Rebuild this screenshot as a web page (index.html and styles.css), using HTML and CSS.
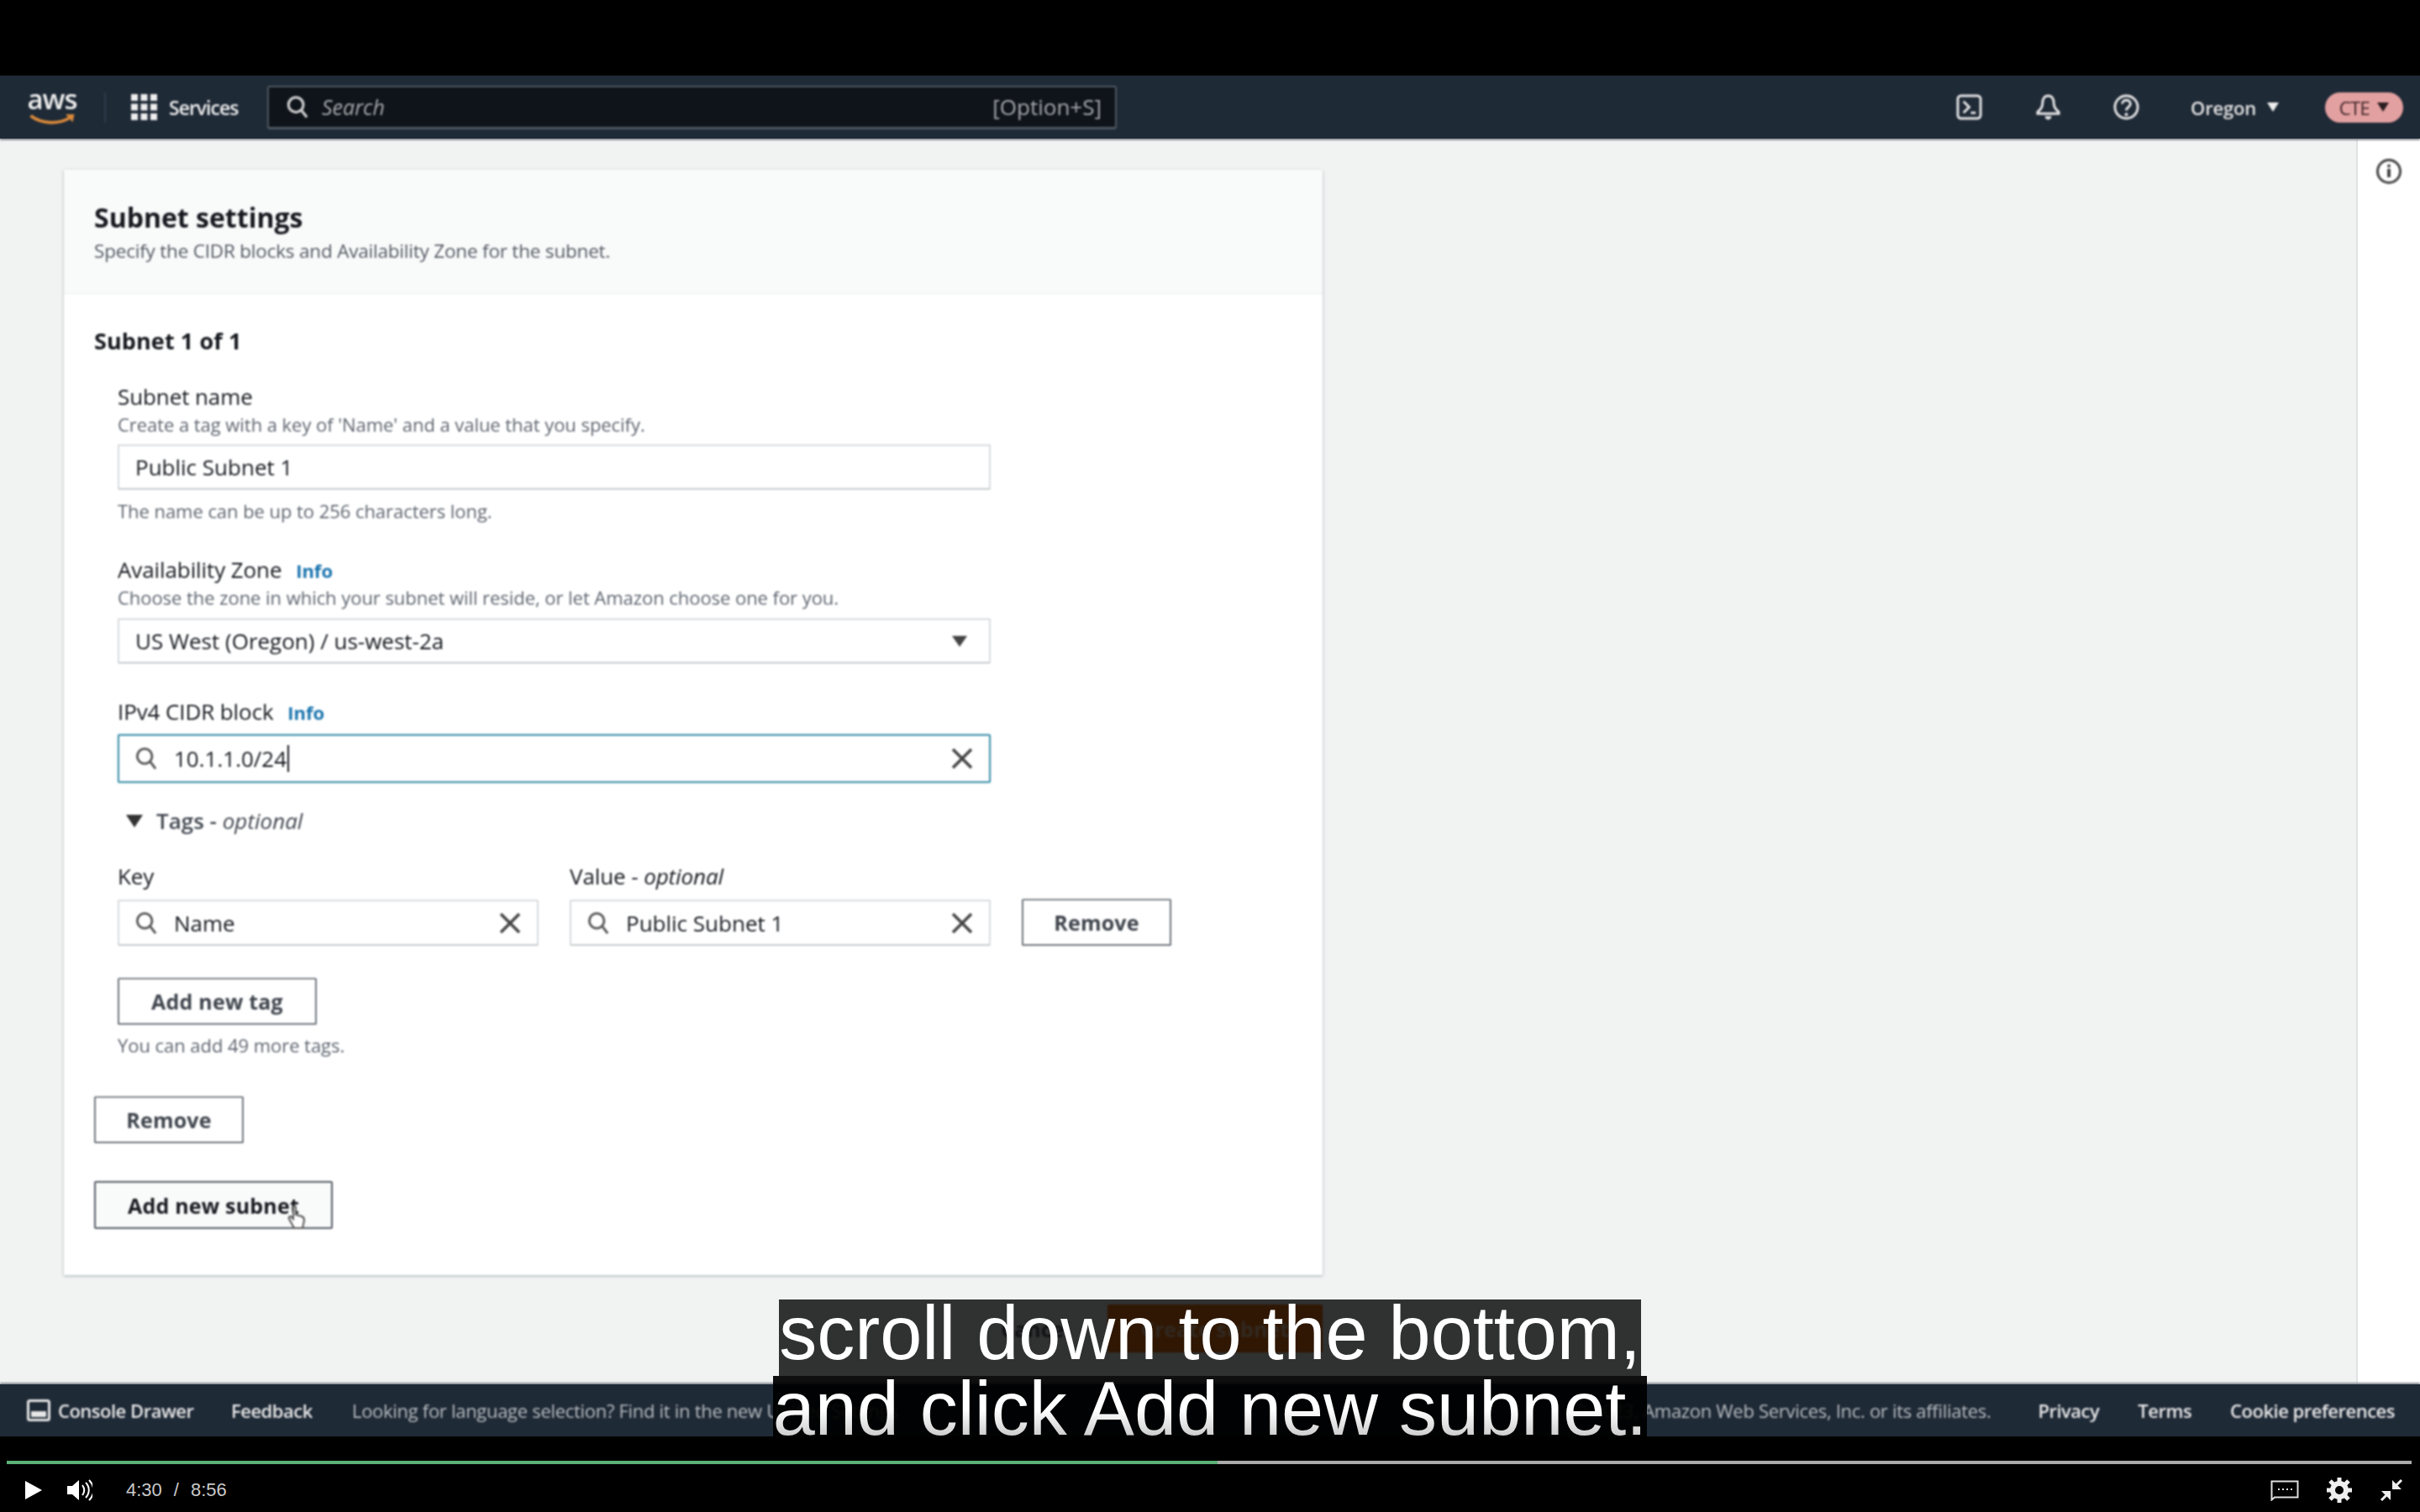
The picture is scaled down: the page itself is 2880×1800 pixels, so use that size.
FILE: index.html
```html
<!DOCTYPE html>
<html lang="en">
<head>
<meta charset="utf-8">
<title>Subnet settings</title>
<link rel="stylesheet" href="styles.css">
</head>
<body>
<div class="letterbox"></div>
<div class="video">
  <header class="nav">
    <div class="logo"><span class="logo-word">aws</span>
      <svg class="logo-smile" viewBox="0 0 60 18"><path d="M3 3c14 11 36 11 50 2" fill="none" stroke="#d9893a" stroke-width="4"/><path d="M47 1l11 0-2 10z" fill="#d9893a"/></svg>
    </div>
    <div class="nav-sep"></div>
    <svg class="grid-icon" viewBox="0 0 31 31"><g fill="#eee"><rect x="0" y="0" width="8" height="8"/><rect x="11.500" y="0" width="8" height="8"/><rect x="23" y="0" width="8" height="8"/><rect x="0" y="11.500" width="8" height="8"/><rect x="11.500" y="11.500" width="8" height="8"/><rect x="23" y="11.500" width="8" height="8"/><rect x="0" y="23" width="8" height="8"/><rect x="11.500" y="23" width="8" height="8"/><rect x="23" y="23" width="8" height="8"/></g></svg>
    <span class="services">Services</span>
    <div class="search">
      <svg class="search-icon" viewBox="0 0 28 30"><circle cx="12" cy="12" r="9.500" fill="none" stroke="#ccc" stroke-width="3.500"/><path d="M19 19l7 9" stroke="#ccc" stroke-width="3.500"/></svg>
      <span class="search-text">Search</span>
      <span class="search-key">[Option+S]</span>
    </div>
    <div class="nav-right">
      <svg class="nav-icon" viewBox="0 0 32 32"><rect x="2" y="2" width="28" height="28" rx="4" fill="none" stroke="#e6e6e6" stroke-width="3"/><path d="M9 9l7 7-7 7" fill="none" stroke="#e6e6e6" stroke-width="3"/><path d="M18 23h6" stroke="#e6e6e6" stroke-width="3"/></svg>
      <svg class="nav-icon bell" viewBox="0 0 32 34"><path d="M16 3c-6 0-7 5-7 10 0 5-3 7-6 10v2h26v-2c-3-3-6-5-6-10 0-5-1-10-7-10z" fill="none" stroke="#e6e6e6" stroke-width="3"/><path d="M12 28c0 6 8 6 8 0z" fill="#e6e6e6"/></svg>
      <svg class="nav-icon help" viewBox="0 0 32 32"><circle cx="16" cy="16" r="14" fill="none" stroke="#e6e6e6" stroke-width="3"/><path d="M11 12c0-6 10-6 10 0 0 4-5 4-5 8" fill="none" stroke="#e6e6e6" stroke-width="3"/><circle cx="16" cy="25" r="2" fill="#e6e6e6"/></svg>
      <span class="region">Oregon</span><span class="caret caret-light"></span>
      <span class="pill">CTE<span class="caret caret-dark"></span></span>
    </div>
  </header>

  <div class="main">
    <div class="content">
      <section class="card">
        <div class="card-head">
          <h2 class="title">Subnet settings</h2>
          <p class="desc">Specify the CIDR blocks and Availability Zone for the subnet.</p>
        </div>
        <div class="card-body">
          <h3 class="subhead">Subnet 1 of 1</h3>
          <div class="fields">
            <div class="label">Subnet name</div>
            <div class="hint">Create a tag with a key of 'Name' and a value that you specify.</div>
            <div class="input gap-input">Public Subnet 1</div>
            <div class="hint hint-after">The name can be up to 256 characters long.</div>

            <div class="label gap-avail">Availability Zone <a class="info">Info</a></div>
            <div class="hint">Choose the zone in which your subnet will reside, or let Amazon choose one for you.</div>
            <div class="input gap-input select">US West (Oregon) / us-west-2a<span class="caret caret-select"></span></div>

            <div class="label gap-cidr">IPv4 CIDR block <a class="info">Info</a></div>
            <div class="input gap-input focus">
              <svg class="mag" viewBox="0 0 28 30"><circle cx="12" cy="12" r="9.500" fill="none" stroke="#555" stroke-width="3"/><path d="M19 19l7 9" stroke="#555" stroke-width="3"/></svg>
              <span>10.1.1.0/24</span><span class="text-caret"></span>
              <svg class="clear" viewBox="0 0 26 26"><path d="M2 2l22 22M24 2L2 24" stroke="#444" stroke-width="3.500"/></svg>
            </div>

            <div class="tags-toggle"><span class="caret caret-tags"></span>Tags - <em>optional</em></div>

            <div class="tag-row">
              <div class="tag-col">
                <div class="label">Key</div>
                <div class="input gap-input tag-input">
                  <svg class="mag" viewBox="0 0 28 30"><circle cx="12" cy="12" r="9.500" fill="none" stroke="#555" stroke-width="3"/><path d="M19 19l7 9" stroke="#555" stroke-width="3"/></svg>
                  <span>Name</span>
                  <svg class="clear" viewBox="0 0 26 26"><path d="M2 2l22 22M24 2L2 24" stroke="#444" stroke-width="3.500"/></svg>
                </div>
              </div>
              <div class="tag-col">
                <div class="label">Value - <em>optional</em></div>
                <div class="input gap-input tag-input">
                  <svg class="mag" viewBox="0 0 28 30"><circle cx="12" cy="12" r="9.500" fill="none" stroke="#555" stroke-width="3"/><path d="M19 19l7 9" stroke="#555" stroke-width="3"/></svg>
                  <span>Public Subnet 1</span>
                  <svg class="clear" viewBox="0 0 26 26"><path d="M2 2l22 22M24 2L2 24" stroke="#444" stroke-width="3.500"/></svg>
                </div>
              </div>
              <button class="btn btn-remove-tag">Remove</button>
            </div>

            <button class="btn btn-add-tag">Add new tag</button>
            <div class="hint hint-note">You can add 49 more tags.</div>
          </div>
          <button class="btn btn-remove">Remove</button>
          <button class="btn btn-add-subnet">Add new subnet
            <svg class="cursor" viewBox="0 0 22 30"><path d="M7 2c2-1 3 0 3 2v8l7 2c3 1 3 3 3 5l-2 9H8L2 17c-1-2 1-4 3-2l2 2z" fill="#fff" stroke="#555" stroke-width="2"/></svg>
          </button>
        </div>
      </section>
      <div class="actions">
        <span class="cancel">Cancel</span>
        <button class="btn-primary">Create subnet</button>
      </div>
    </div>
    <aside class="side">
      <svg class="side-info" viewBox="0 0 32 32"><circle cx="16" cy="16" r="13.500" fill="none" stroke="#444" stroke-width="3"/><circle cx="16" cy="9.500" r="2" fill="#444"/><path d="M16 13v10" stroke="#444" stroke-width="4"/></svg>
    </aside>
  </div>

  <footer class="foot">
    <svg class="drawer" viewBox="0 0 28 26"><rect x="1.500" y="1.500" width="25" height="23" rx="2" fill="none" stroke="#e6e6e6" stroke-width="3"/><rect x="5" y="14" width="18" height="7" fill="#e6e6e6"/></svg>
    <span class="foot-link foot-console">Console Drawer</span>
    <span class="foot-link foot-feedback">Feedback</span>
    <span class="foot-muted">Looking for language selection? Find it in the new Unified Settings</span>
    <span class="foot-right">
      <span class="foot-muted">© 2023, Amazon Web Services, Inc. or its affiliates.</span>
      <span class="foot-link foot-privacy">Privacy</span>
      <span class="foot-link foot-terms">Terms</span>
      <span class="foot-link foot-cookie">Cookie preferences</span>
    </span>
  </footer>
</div>

<div class="player">
  <div class="track"><div class="track-fill"></div></div>
  <div class="controls">
    <svg class="play" viewBox="0 0 20 22"><path d="M0 0l20 11L0 22z" fill="#fff"/></svg>
    <svg class="volume" viewBox="0 0 30 26"><path d="M0 8h6l8-7v24l-8-7H0z" fill="#fff"/><path d="M18 7c3 4 3 8 0 12M22 4c5 5 5 13 0 18M26 1c7 7 7 17 0 24" fill="none" stroke="#fff" stroke-width="2"/></svg>
    <span class="time">4:30</span><span class="time time-sep">/</span><span class="time">8:56</span>
    <div class="controls-right">
      <svg class="ctl-cc" viewBox="0 0 34 25"><path d="M1.500 1.500h31v19H5l-3.500 3z" fill="none" stroke="#ddd" stroke-width="2"/><path d="M9 11h2M14 11h2M19 11h2M24 11h2" stroke="#ddd" stroke-width="2"/></svg>
      <svg class="ctl-gear" viewBox="0 0 30 30"><circle cx="15" cy="15" r="8" fill="none" stroke="#eee" stroke-width="6"/><path d="M15 0v7M15 23v7M0 15h7M23 15h7M4 4l5 5M21 21l5 5M26 4l-5 5M9 21l-5 5" stroke="#eee" stroke-width="5"/></svg>
      <svg class="ctl-shrink" viewBox="0 0 28 28"><path d="M17 11l9-9M11 17l-9 9" stroke="#eee" stroke-width="3"/><path d="M15 2v11h11zM2 15h11v11z" fill="#eee"/></svg>
    </div>
  </div>
</div>

<div class="captions">
  <span class="cap-line cap-one">scroll down to the bottom,</span>
  <span class="cap-line cap-two">and click Add new subnet.</span>
</div>
</body>
</html>
```
FILE: styles.css
```css
* { box-sizing: border-box; }
html, body { margin: 0; padding: 0; }
body {
  width: 2880px;
  height: 1800px;
  overflow: hidden;
  position: relative;
  background: #000;
  display: flex;
  flex-direction: column;
  font-family: "Open Sans", "Liberation Sans", sans-serif;
  color: #16191f;
}
.letterbox { height: 90px; background: #000; flex: none; }
.video {
  height: 1620px;
  flex: none;
  display: flex;
  flex-direction: column;
}
/* the source is a compressed video: soften its content, not its page edges */
.nav > *, .content, .side-info, .foot > * { filter: blur(1px); }

/* top nav */
.nav {
  height: 75px;
  flex: none;
  background: #1f2a37;
  display: flex;
  align-items: center;
  padding-left: 33px;
  color: #eee;
  box-shadow: 0 2px 2px #8b9096;
  position: relative;
  z-index: 2;
}
.logo { width: 58px; height: 50px; display: flex; flex-direction: column; align-items: center; }
.logo-word { font: 600 33px/30px "Open Sans", sans-serif; color: #eee; letter-spacing: -1px; }
.logo-smile { width: 58px; height: 17px; margin-top: 2px; }
.nav-sep { width: 2px; height: 36px; background: #303c4a; margin: 0 30px 0 33px; }
.grid-icon { width: 31px; height: 31px; flex: none; }
.services { font-size: 23px; font-weight: 600; margin-left: 14px; letter-spacing: -1px; color: #eee; width: 86px; white-space: nowrap; }
.search {
  width: 1011px;
  height: 52px;
  margin-left: 31px;
  background: #0f141a;
  border: 2px solid #4d5660;
  border-bottom-width: 3px;
  border-radius: 3px;
  display: flex;
  align-items: center;
  padding: 0 16px 0 21px;
  color: #a5a9ad;
}
.search-icon { width: 26px; height: 29px; flex: none; }
.search-text { font-size: 25px; font-style: italic; margin-left: 16px; flex: 1; }
.search-key { font-size: 26px; color: #a5a9ad; }
.nav-right { margin-left: auto; display: flex; align-items: center; padding-right: 20px; filter: none; }
.nav-right > * { filter: blur(1px); }
.nav-icon { width: 31px; height: 31px; flex: none; margin-right: 63px; }
.nav-icon.bell { height: 33px; margin-right: 62px; }
.nav-icon.help { margin-right: 61px; }
.region { font-size: 22px; font-weight: 600; color: #e4e4e4; letter-spacing: -0.2px; }
.caret { display: inline-block; width: 0; height: 0; border-style: solid; border-color: transparent; border-width: 11px 7px 0; }
.caret-light { border-top-color: #eee; margin-left: 13px; margin-right: 55px; }
.pill {
  width: 93px;
  height: 36px;
  border-radius: 18px;
  background: #e3a0a0;
  color: #3a2226;
  font-size: 22px;
  display: flex;
  align-items: center;
  justify-content: center;
  gap: 9px;
  letter-spacing: -0.5px;
}
.caret-dark { border-top-color: #2b1d20; }

/* main area */
.main { flex: 1; display: flex; min-height: 0; background: #f1f3f3; position: relative; }
.content { flex: 1; padding: 37px 0 0 76px; }
.side { width: 76px; flex: none; background: #fff; border-left: 2px solid #dfe2e4; display: flex; justify-content: center; padding-top: 23px; }
.side-info { width: 32px; height: 32px; }
.card { width: 1498px; background: #fff; box-shadow: 0 1px 3px rgba(0, 28, 36, .35); }
.card-head { height: 148px; background: #f9fafa; padding: 37px 36px 0; border-bottom: 1px solid #edeeef; }
.title { margin: 0; font-size: 32px; line-height: 40px; font-weight: 700; letter-spacing: 0; }
.desc { margin: 5px 0 0; font-size: 22.500px; line-height: 30px; color: #545b64; letter-spacing: -0.2px; }
.card-body { padding: 36px 36px 55px; display: flex; flex-direction: column; align-items: flex-start; }
.subhead { margin: 0 0 28px; font-size: 27px; line-height: 40px; font-weight: 700; letter-spacing: 0.1px; }
.fields { padding-left: 28px; display: flex; flex-direction: column; align-items: flex-start; }
.label { font-size: 26px; line-height: 36px; letter-spacing: -0.1px; color: #16191f; white-space: nowrap; }
.info { font-size: 22px; line-height: 1; font-weight: 700; color: #1a74ae; margin-left: 10px; letter-spacing: 0; }
.hint { font-size: 22px; line-height: 30px; color: #5f6670; letter-spacing: -0.05px; white-space: nowrap; }
.input {
  width: 1039px;
  height: 54px;
  border: 2px solid #d8dbde;
  border-bottom-color: #c6cacd;
  border-radius: 2px;
  background: #fff;
  display: flex;
  align-items: center;
  padding: 0 19px;
  font-size: 26px;
  letter-spacing: 0;
  color: #16191f;
}
.gap-input { margin-top: 9px; }
.hint-after { margin-top: 10px; }
.gap-avail { margin-top: 37px; }
.select { margin-top: 10px; justify-content: space-between; padding-right: 26px; }
.caret-select { border-top-color: #444; border-width: 13px 9px 0; }
.gap-cidr { margin-top: 39px; }
.focus { height: 58px; border-color: #3f8fa8; box-shadow: 0 0 2px #9fd4e4; }
.mag { width: 26px; height: 28px; flex: none; margin-right: 20px; }
.clear { width: 26px; height: 26px; flex: none; margin-left: auto; }
.text-caret { width: 2px; height: 32px; background: #16191f; margin-left: 1px; }
.tags-toggle { margin-top: 27px; margin-left: 10px; font-size: 26px; line-height: 36px; font-weight: 600; color: #414750; display: flex; align-items: center; white-space: pre; }
.tags-toggle em { font-weight: 400; }
.caret-tags { border-top-color: #333; border-width: 15px 10px 0; margin-right: 16px; }
.tag-row { margin-top: 30px; display: flex; align-items: flex-end; gap: 37px; }
.tag-col { display: flex; flex-direction: column; align-items: flex-start; }
.tag-input { width: 501px; margin-top: 10px; height: 55px; }
.btn {
  background: #fff;
  border: 2px solid #6f767d;
  border-top-color: #808588;
  border-radius: 2px;
  font-family: inherit;
  font-size: 25px;
  font-weight: 700;
  letter-spacing: 0.2px;
  color: #3f454d;
  height: 56px;
  padding: 0;
  display: block;
}
.btn-remove-tag { width: 178px; margin-bottom: 0; }
.btn-add-tag { width: 237px; margin-top: 38px; }
.hint-note { margin-top: 9px; }
.btn-remove { width: 178px; margin-top: 46px; }
.btn-add-subnet { width: 284px; height: 57px; margin-top: 45px; position: relative; background: #f9fafa; color: #16191f; border-color: #545b64; }
.cursor { position: absolute; left: 228px; top: 26px; width: 22px; height: 30px; }
.actions { width: 1498px; margin-top: 35px; display: flex; justify-content: flex-end; align-items: center; gap: 44px; }
.cancel { font-size: 25px; font-weight: 700; color: #545b64; }
.btn-primary { width: 256px; height: 57px; background: #ec7211; color: #f6c9a0; border: 0; border-radius: 2px; font: 700 25px "Open Sans", sans-serif; }

/* console footer */
.foot {
  height: 62px;
  flex: none;
  background: #1f2a37;
  box-shadow: 0 -2px 2px #8b9096;
  display: flex;
  align-items: center;
  padding-left: 32px;
  font-size: 22px;
  letter-spacing: -0.5px;
  white-space: nowrap;
  position: relative;
}
.drawer { width: 28px; height: 26px; flex: none; margin-right: 9px; }
.foot-link { color: #e8e8e8; font-weight: 600; }
.foot-muted { color: #b8bcc0; letter-spacing: -0.3px; }
.foot-console { width: 206px; }
.foot-feedback { width: 144px; }
.foot-right { margin-left: auto; display: flex; align-items: center; padding-right: 30px; filter: none; }
.foot-right > * { filter: blur(1px); }
.foot-privacy { margin-left: 56px; }
.foot-terms { margin-left: 46px; }
.foot-cookie { margin-left: 46px; }

/* player */
.player { flex: 1; background: #000; padding: 29px 10px 0 8px; }
.track { height: 4px; background: #aaa; }
.track-fill { width: 1441px; height: 4px; background: #5cb176; }
.controls { display: flex; align-items: center; margin-top: 19px; padding-left: 22px; height: 24px; color: #ccc; }
.play { width: 20px; height: 22px; }
.volume { width: 30px; height: 26px; margin-left: 30px; }
.time { font: 22px "Liberation Sans", sans-serif; color: #c8c8c8; }
.volume + .time { margin-left: 40px; }
.time-sep { margin: 0 14px; }
.controls-right { margin-left: auto; display: flex; align-items: center; gap: 33px; padding-right: 10px; }
.ctl-cc { width: 34px; height: 25px; }
.ctl-gear { width: 30px; height: 30px; }
.ctl-shrink { width: 28px; height: 28px; }

/* burned-in captions, laid over the video */
.captions {
  position: absolute;
  left: 0;
  right: 0;
  top: 1547px;
  height: 163px;
  display: flex;
  flex-direction: column;
  align-items: center;
  font: 90px "Liberation Sans", sans-serif;
  color: #fff;
  white-space: nowrap;
}
.cap-line { flex: none; }
.cap-one { height: 91px; line-height: 80px; background: rgba(0, 0, 0, .8); }
.cap-two { height: 72px; line-height: 78px; background: rgba(0, 0, 0, .94); position: relative; }
.cap-two::after {
  content: "";
  position: absolute;
  left: 0;
  right: 0;
  bottom: 0;
  height: 32px;
  background: linear-gradient(rgba(0, 0, 0, 0), rgba(0, 0, 0, .2));
}
```
